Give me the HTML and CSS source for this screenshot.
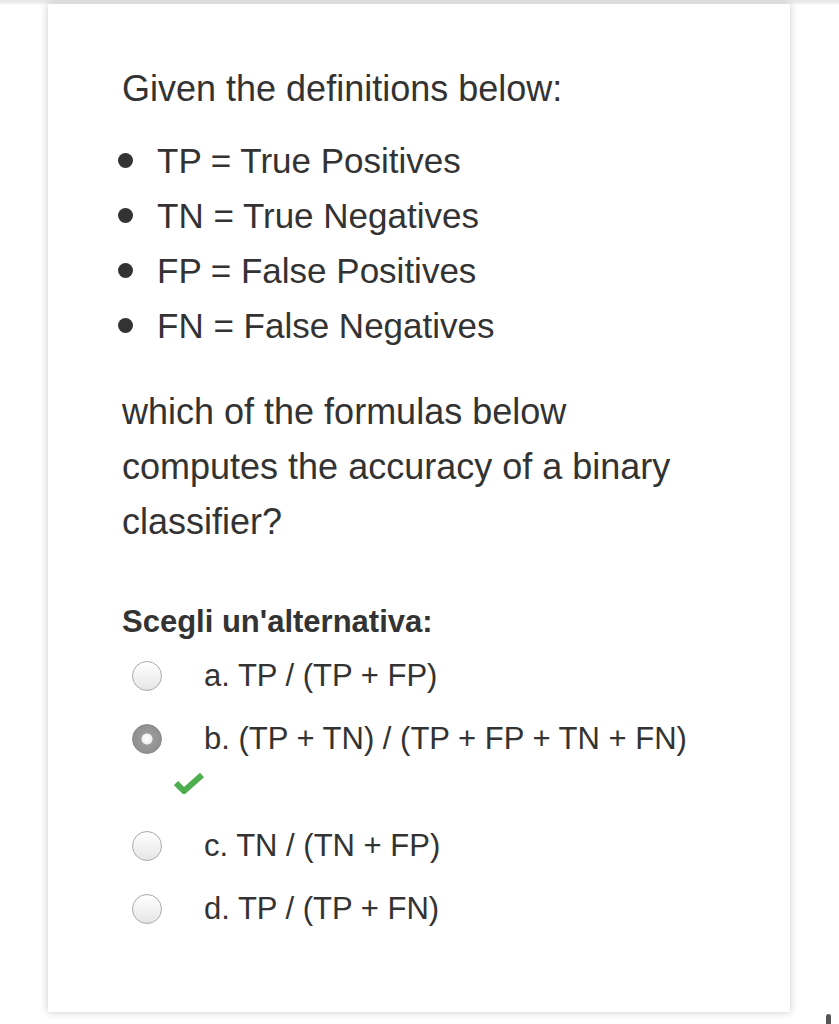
FILE: index.html
```html
<!DOCTYPE html>
<html>
<head>
<meta charset="utf-8">
<link rel="stylesheet" href="styles.css">
</head>
<body>
<div class="page">
  <div class="card">
    <p class="intro">Given the definitions below:</p>
    <ul class="defs">
      <li>TP = True Positives</li>
      <li>TN = True Negatives</li>
      <li>FP = False Positives</li>
      <li>FN = False Negatives</li>
    </ul>
    <p class="question">which of the formulas below computes the accuracy of a binary classifier?</p>
    <div class="prompt">Scegli un'alternativa:</div>
    <div class="options">
      <div class="option"><span class="radio"></span><span class="label">a. TP / (TP + FP)</span></div>
      <div class="option selected"><span class="radio"></span><span class="label">b. (TP + TN) / (TP + FP + TN + FN)</span></div>
      <div class="check"><svg width="30" height="22" viewBox="0 0 30 22"><path d="M2 11 L10 19 L28 3" fill="none" stroke="#4cae4c" stroke-width="6" stroke-linecap="butt" stroke-linejoin="miter"/></svg></div>
      <div class="option"><span class="radio"></span><span class="label">c. TN / (TN + FP)</span></div>
      <div class="option"><span class="radio"></span><span class="label">d. TP / (TP + FN)</span></div>
    </div>
  </div>
  <span class="scroll-thumb"></span>
</div>
</body>
</html>
```
FILE: styles.css
```css
html, body {
  margin: 0;
  padding: 0;
  background: #ffffff;
}
.page {
  position: relative;
  width: 839px;
  height: 1024px;
  overflow: hidden;
  padding: 4px 0 0 48px;
  box-sizing: border-box;
  background: linear-gradient(#e6e6e6 0, #f4f4f4 4px, #ffffff 5px);
}
.card {
  width: 742px;
  height: 1008px;
  box-sizing: border-box;
  background: #ffffff;
  box-shadow: 0 0 8px rgba(0,0,0,0.22);
  padding: 57px 40px 0 74px;
  font-family: "Liberation Sans", Arial, sans-serif;
  font-size: 36px;
  color: #333333;
  line-height: 55px;
}
.intro {
  margin: 0 0 17px 0;
}
.defs {
  margin: 0;
  padding: 0;
  list-style: none;
  font-size: 35px;
}
.defs li {
  display: flex;
  align-items: center;
}
.defs li::before {
  content: "";
  width: 15px;
  height: 15px;
  border-radius: 50%;
  background: #333333;
  margin: 0 24px 0 -4px;
  flex: none;
}
.question {
  margin: 31px 0 0 0;
  width: 580px;
}
.prompt {
  margin-top: 45px;
  font-weight: bold;
  font-size: 31px;
}
.options {
  margin-top: -5px;
  display: flex;
  flex-direction: column;
  font-size: 31px;
}
.option {
  display: flex;
  align-items: center;
  height: 63px;
  white-space: nowrap;
}
.radio {
  width: 28px;
  height: 28px;
  border-radius: 50%;
  border: 1px solid #a9a9a9;
  background: linear-gradient(#ffffff, #e6e6e6);
  margin-left: 10px;
  flex: none;
  box-sizing: content-box;
}
.option.selected .radio {
  background: radial-gradient(circle, #ffffff 0, #f2f2f2 5px, #9a9a9a 6px, #8f8f8f 14px);
  border-color: #8a8a8a;
}
.label {
  margin-left: 42px;
}
.check {
  height: 44px;
  padding: 2px 0 0 52px;
  box-sizing: border-box;
  display: flex;
  align-items: flex-start;
}
.scroll-thumb {
  position: absolute;
  left: 826px;
  top: 1014px;
  width: 5px;
  height: 14px;
  border-radius: 3px;
  background: #555555;
}
```
